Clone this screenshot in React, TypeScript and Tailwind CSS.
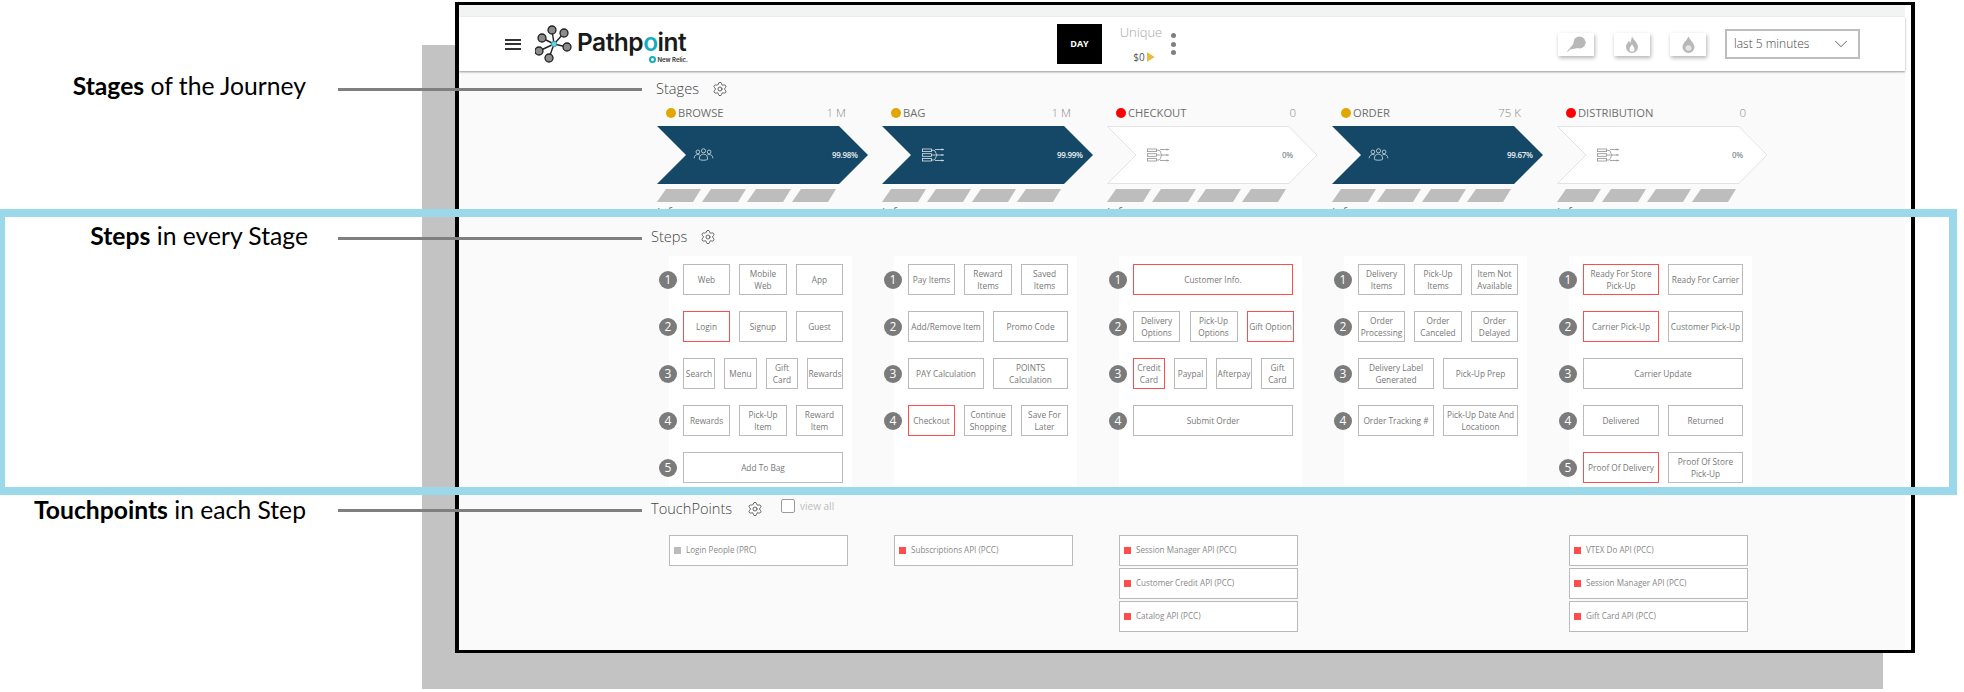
import { Settings, ChevronDown } from 'lucide-react';

type Item = [string, string, boolean?];
type Col = { ml: string; boxes: string; rows: Item[][] };

const columns: Col[] = [
  {
    ml: 'ml-[210px]', boxes: 'w-[160px]',
    rows: [
      [['Web', 'w-[47px]'], ['Mobile\nWeb', 'w-[48px]'], ['App', 'w-[47px]']],
      [['Login', 'w-[47px]', true], ['Signup', 'w-[48px]'], ['Guest', 'w-[47px]']],
      [['Search', 'w-[32px]'], ['Menu', 'w-[33px]'], ['Gift Card', 'w-[32px]'], ['Rewards', 'w-[36px]']],
      [['Rewards', 'w-[47px]'], ['Pick-Up Item', 'w-[48px]'], ['Reward Item', 'w-[47px]']],
      [['Add To Bag', 'w-[160px]']],
    ],
  },
  {
    ml: 'ml-[42px]', boxes: 'w-[160px]',
    rows: [
      [['Pay Items', 'w-[47px]'], ['Reward Items', 'w-[48px]'], ['Saved Items', 'w-[47px]']],
      [['Add/Remove Item', 'w-[76px]'], ['Promo Code', 'w-[75px]']],
      [['PAY Calculation', 'w-[76px]'], ['POINTS Calculation', 'w-[75px]']],
      [['Checkout', 'w-[47px]', true], ['Continue Shopping', 'w-[48px]'], ['Save For Later', 'w-[47px]']],
    ],
  },
  {
    ml: 'ml-[42px]', boxes: 'w-[161px]',
    rows: [
      [['Customer Info.', 'w-[160px]', true]],
      [['Delivery Options', 'w-[47px]'], ['Pick-Up Options', 'w-[48px]'], ['Gift Option', 'w-[47px]', true]],
      [['Credit Card', 'w-[32px]', true], ['Paypal', 'w-[33px]'], ['Afterpay', 'w-[36px]'], ['Gift Card', 'w-[33px]']],
      [['Submit Order', 'w-[160px]']],
    ],
  },
  {
    ml: 'ml-[42px]', boxes: 'w-[160px]',
    rows: [
      [['Delivery Items', 'w-[47px]'], ['Pick-Up Items', 'w-[48px]'], ['Item Not Available', 'w-[47px]']],
      [['Order Processing', 'w-[47px]'], ['Order Canceled', 'w-[48px]'], ['Order Delayed', 'w-[47px]']],
      [['Delivery Label Generated', 'w-[76px]'], ['Pick-Up Prep', 'w-[75px]']],
      [['Order Tracking #', 'w-[76px]'], ['Pick-Up Date And Locatioon', 'w-[75px]']],
    ],
  },
  {
    ml: 'ml-[42px]', boxes: 'w-[160px]',
    rows: [
      [['Ready For Store Pick-Up', 'w-[76px]', true], ['Ready For Carrier', 'w-[75px]']],
      [['Carrier Pick-Up', 'w-[76px]', true], ['Customer Pick-Up', 'w-[75px]']],
      [['Carrier Update', 'w-[160px]']],
      [['Delivered', 'w-[76px]'], ['Returned', 'w-[75px]']],
      [['Proof Of Delivery', 'w-[76px]', true], ['Proof Of Store Pick-Up', 'w-[75px]']],
    ],
  },
];

const stages = [
  { name: 'BROWSE', value: '1 M', dot: 'bg-[#e2a600]', solid: true, pct: '99.98%', icon: 'people' },
  { name: 'BAG', value: '1 M', dot: 'bg-[#e2a600]', solid: true, pct: '99.99%', icon: 'net' },
  { name: 'CHECKOUT', value: '0', dot: 'bg-[#ff0000]', solid: false, pct: '0%', icon: 'net' },
  { name: 'ORDER', value: '75 K', dot: 'bg-[#e2a600]', solid: true, pct: '99.67%', icon: 'people' },
  { name: 'DISTRIBUTION', value: '0', dot: 'bg-[#ff0000]', solid: false, pct: '0%', icon: 'net' },
];

function People({ color }: { color: string }) {
  return (
    <svg width="21" height="14" viewBox="0 0 22 15" fill="none" stroke={color} strokeWidth="0.8">
      <circle cx="5" cy="4.2" r="2" />
      <circle cx="17" cy="4.2" r="2" />
      <circle cx="11" cy="3" r="2.2" />
      <path d="M1 11c0-2.600 1.600-4 4-4 .8 0 1.400.2 2 .5M21 11c0-2.600-1.600-4-4-4-.8 0-1.400.2-2 .5" />
      <path d="M6.500 12c0-3.400 1.800-5.500 4.500-5.500s4.500 2.100 4.500 5.500c-1 1.500-8 1.500-9 0z" />
    </svg>
  );
}

function Net({ color }: { color: string }) {
  return (
    <svg width="22" height="15" viewBox="0 0 22 15" fill="none" stroke={color} strokeWidth="0.8">
      <rect x="0.500" y="1" width="9" height="2.600" />
      <rect x="0.500" y="5.700" width="9" height="2.600" />
      <rect x="0.500" y="10.400" width="9" height="2.600" />
      <path d="M9.500 2.300H12c1.500 0 1.500 3 3 4.700M9.500 12H12c1.500 0 1.500-3 3-5M9.500 7H15" />
      <path d="M13 1.500h9M15 7h7M13 12.500h9M20 .5v2M20 6v2M20 11.500v2" />
    </svg>
  );
}

function Logo() {
  const nodes = [
    [7, 13], [17, 5], [29, 8], [32, 22], [14, 33], [4, 26],
  ];
  return (
    <svg width="40" height="38" viewBox="0 0 40 38">
      {nodes.map(([x, y]) => (
        <line key={`${x}-${y}`} x1="19" y1="19" x2={x} y2={y} stroke="#222" strokeWidth="1.400" />
      ))}
      {nodes.map(([x, y]) => (
        <circle key={`c${x}-${y}`} cx={x} cy={y} r="4" fill="#8c8c8c" stroke="#222" strokeWidth="1.300" />
      ))}
      <circle cx="19" cy="19" r="2.800" fill="#6fd0dc" stroke="#1f8fa0" strokeWidth="0.800" />
    </svg>
  );
}

function Chevron({ solid }: { solid: boolean }) {
  return (
    <svg className="absolute inset-0" width="211" height="58" viewBox="0 0 211 58">
      {solid ? (
        <polygon points="0,0 182,0 211,29 182,58 0,58 29,29" fill="#144866" />
      ) : (
        <polygon points="0.500,0.500 182,0.500 210,29 182,57.500 0.500,57.500 29,29" fill="#ffffff" stroke="#e3e3e3" />
      )}
    </svg>
  );
}

function Stage({ s }: { s: (typeof stages)[number] }) {
  const ic = s.solid ? '#dfe7ec' : '#8f8f8f';
  return (
    <div className="w-[211px] shrink-0">
      <div className="flex h-[16px] items-center pl-[9px] pr-[22px]">
        <span className={`h-[10px] w-[10px] rounded-full ${s.dot}`} />
        <span className="ml-[2px] text-[11.2px] text-[#6f6f6f]">{s.name}</span>
        <span className="ml-auto text-[11.5px] font-light text-[#8a8a8a]">{s.value}</span>
      </div>
      <div className="relative mt-[5px] h-[58px] w-[211px]">
        <Chevron solid={s.solid} />
        <div className="relative flex h-full items-center">
          <span className={s.icon === 'people' ? 'ml-[36px] flex' : 'ml-[40px] flex'}>
            {s.icon === 'people' ? <People color={ic} /> : <Net color={ic} />}
          </span>
          <span
            className={`absolute left-[175px] text-[8px] font-semibold tracking-[-0.3px] ${
              s.solid ? 'text-[#e8eef2]' : 'text-[#86929c]'
            }`}
          >
            {s.pct}
          </span>
        </div>
      </div>
      <div className="mt-[5px] flex h-[13px]">
        {[0, 1, 2, 3].map((i) => (
          <span key={i} className="h-[13px] w-[45px] bg-[#bdbdbd] [clip-path:polygon(9px_0,44px_0,36px_100%,0_100%)]" />
        ))}
      </div>
      <div className="mt-[3px] text-[12px] leading-[16px] text-[#777777]">Info</div>
    </div>
  );
}

function StepCol({ col }: { col: Col }) {
  return (
    <div className={`h-[235px] w-[183px] shrink-0 bg-white pt-[8px] ${col.ml}`}>
      <div className="flex flex-col gap-[16px]">
        {col.rows.map((row, i) => (
          <div key={i} className="-ml-[10px] flex items-center">
            <span className="flex h-[18px] w-[18px] shrink-0 items-center justify-center rounded-full bg-[#7b7b7b] text-[12px] leading-none text-white">
              {i + 1}
            </span>
            <div className={`ml-[6px] flex justify-between ${col.boxes}`}>
              {row.map(([text, w, red]) => (
                <div
                  key={text}
                  className={`flex h-[31px] items-center justify-center whitespace-pre-line border text-center text-[8.3px] leading-[11.500px] text-[#777777] ${w} ${
                    red ? 'border-[#ff4c4c]' : 'border-[#bababa]'
                  }`}
                >
                  {text}
                </div>
              ))}
            </div>
          </div>
        ))}
      </div>
    </div>
  );
}

function Touch({ text, gray }: { text: string; gray?: boolean }) {
  return (
    <div className="flex h-[31px] w-[179px] items-center border border-[#bababa] bg-white pl-[4px]">
      <span className={`h-[7px] w-[7px] ${gray ? 'bg-[#bbbbbb]' : 'bg-[#ff4c4c]'}`} />
      <span className="ml-[5px] text-[8.1px] text-[#888888]">{text}</span>
    </div>
  );
}

function SectionTitle({ text }: { text: string }) {
  return <span className="text-[14.6px] font-light text-[#444444]">{text}</span>;
}

export default function App() {
  return (
    <div className="relative h-[692px] w-[1964px] overflow-hidden bg-white font-['Open_Sans',sans-serif]">
      {/* grey backdrop behind the window */}
      <div className="absolute left-[422px] top-[45px] h-[644px] w-[1461px] bg-[#c3c3c3]" />

      {/* the framed application window */}
      <div className="relative ml-[455px] mt-[2px] h-[651px] w-[1460px] border-x-4 border-y-[3px] border-black bg-white">
        <div className="h-full w-[1446px] bg-[#fafafa]">
          <div className="h-[12px] bg-[#f2f4f4]" />
          <header className="flex h-[54px] items-center bg-white pr-[45px] shadow-[0_1px_2px_rgba(0,0,0,0.4)]">
            <div className="ml-[46px] flex w-[16px] flex-col gap-[2.500px]">
              <span className="h-[2px] bg-[#333333]" />
              <span className="h-[2px] bg-[#333333]" />
              <span className="h-[2px] bg-[#333333]" />
            </div>
            <div className="ml-[14px]">
              <Logo />
            </div>
            <div className="relative ml-[2px] mt-[3px] w-[112px]">
              <div className="font-['Inter',sans-serif] text-[24.500px] font-semibold leading-[28px] tracking-[-0.5px] text-[#1a1a1a]">
                Pathp<span className="text-[#12aebf]">o</span>int
              </div>
              <div className="flex items-center justify-end gap-[2px] pr-[1px] font-['Inter',sans-serif] text-[6px] font-semibold leading-[7px] text-[#333333]">
                <span className="h-[7px] w-[7px] rounded-full border-2 border-[#12aebf]" />
                New Relic.
              </div>
            </div>
            <div className="ml-[368px] flex h-[40px] w-[45px] items-center justify-center bg-black text-[9px] font-bold text-white">
              DAY
            </div>
            <div className="ml-[18px] flex h-[40px] w-[42px] flex-col items-center justify-between">
              <span className="-mt-[1px] text-[13px] font-light leading-[18px] text-[#a6a6a6]">Unique</span>
              <span className="flex items-center gap-[2px] pl-[6px] text-[10px] leading-[14px] text-[#555555]">
                $0
                <span className="h-[10px] w-[8px] bg-[#e8bc3c] [clip-path:polygon(0_0,100%_50%,0_100%)]" />
              </span>
            </div>
            <div className="ml-[9px] flex flex-col gap-[3.500px]">
              <span className="h-[5px] w-[5px] rounded-full bg-[#7f7f7f]" />
              <span className="h-[5px] w-[5px] rounded-full bg-[#7f7f7f]" />
              <span className="h-[5px] w-[5px] rounded-full bg-[#7f7f7f]" />
            </div>
            <div className="ml-auto flex items-center gap-[20px]">
              <button className="flex h-[23px] w-[36px] items-center justify-center bg-white shadow-[1px_2px_4px_rgba(0,0,0,0.3)]">
                <svg width="19" height="16" viewBox="0 0 19 16" fill="#b8b8b8">
                  <circle cx="12.500" cy="6.500" r="6" />
                  <path d="M0 15.500 L8 6 L11 12 L3 13.500 L1 15.800 Z" />
                  <path d="M18 5.500 L19 6.500 L18 7.500 Z" />
                </svg>
              </button>
              <button className="flex h-[23px] w-[36px] items-center justify-center bg-white shadow-[1px_2px_4px_rgba(0,0,0,0.3)]">
                <svg width="12" height="17" viewBox="0 0 12 17">
                  <path d="M6 0 C7 4 12 6.500 12 11 A6 6 0 0 1 0 11 C0 8 2 6.500 3 4.500 C3.500 6 4 6.500 4.500 7 C5 5 5.500 2.500 6 0Z" fill="#b8b8b8" />
                  <path d="M6 8 C6.500 10 8.500 11 8.500 13.300 A2.500 2.500 0 0 1 3.500 13.300 C3.500 11 5.500 10 6 8Z" fill="#ffffff" />
                </svg>
              </button>
              <button className="flex h-[23px] w-[36px] items-center justify-center bg-white shadow-[1px_2px_4px_rgba(0,0,0,0.3)]">
                <svg width="13" height="17" viewBox="0 0 13 17">
                  <path d="M6.500 0.500 C8 4 12.500 7.500 12.500 11 A6 6 0 0 1 0.500 11 C0.500 7.500 5 4 6.500 0.500Z" fill="#b8b8b8" />
                  <ellipse cx="6.500" cy="12" rx="3" ry="2.800" fill="#e4e4e4" />
                </svg>
              </button>
              <div className="-ml-[1px] flex h-[30px] w-[135px] items-center justify-between border-2 border-[#bdbdbd] bg-white pl-[7px] pr-[6px]">
                <span className="text-[12px] font-light text-[#444444]">last 5 minutes</span>
                <ChevronDown size={22} strokeWidth={0.9} className="text-[#33415c]" />
              </div>
            </div>
          </header>

          <section className="h-[156px] overflow-hidden pt-[8px]">
            <div className="flex h-[20px] items-center gap-[13px] pl-[197px]">
              <SectionTitle text="Stages" />
              <Settings size={16} strokeWidth={1.200} className="text-[#444444]" />
            </div>
            <div className="mt-[6px] flex gap-[14px] pl-[198px]">
              {stages.map((s) => (
                <Stage key={s.name} s={s} />
              ))}
            </div>
          </section>

          <section className="h-[272px]">
            <div className="flex h-[20px] items-center gap-[13px] pl-[192px]">
              <SectionTitle text="Steps" />
              <Settings size={16} strokeWidth={1.200} className="text-[#444444]" />
            </div>
            <div className="mt-[9px] flex">
              {columns.map((c, i) => (
                <StepCol key={i} col={c} />
              ))}
            </div>
          </section>

          <section>
            <div className="flex h-[20px] items-center pl-[192px]">
              <SectionTitle text="TouchPoints" />
              <Settings size={16} strokeWidth={1.200} className="ml-[15px] text-[#444444]" />
              <span className="mb-[6px] ml-[18px] h-[14px] w-[14px] rounded-[2px] border border-[#9a9a9a] bg-white" />
              <span className="mb-[6px] ml-[5px] text-[10px] text-[#bdbdbd]">view all</span>
            </div>
            <div className="mt-[16px] flex pl-[210px]">
              <div className="w-[225px]">
                <Touch text="Login People (PRC)" gray />
              </div>
              <div className="w-[225px]">
                <Touch text="Subscriptions API (PCC)" />
              </div>
              <div className="flex w-[450px] flex-col gap-[2px]">
                <Touch text="Session Manager API (PCC)" />
                <Touch text="Customer Credit API (PCC)" />
                <Touch text="Catalog API (PCC)" />
              </div>
              <div className="flex flex-col gap-[2px]">
                <Touch text="VTEX Do API (PCC)" />
                <Touch text="Session Manager API (PCC)" />
                <Touch text="Gift Card API (PCC)" />
              </div>
            </div>
          </section>
        </div>
      </div>

      {/* annotation highlight */}
      <div className="absolute left-0 top-[209px] h-[286px] w-[1957px] border-y-8 border-l-[5px] border-r-8 border-[#9ad8ea]" />

      {/* annotation captions and connector lines */}
      <div className="absolute left-0 top-[72px] flex w-[642px] items-center">
        <p className="w-[306px] text-right font-['Lato',sans-serif] text-[24.700px] leading-[28px] text-black">
          <b>Stages</b> of the Journey
        </p>
        <span className="ml-[32px] mt-[6px] h-[3px] flex-1 bg-[#7f7f7f]" />
      </div>
      <div className="absolute left-0 top-[222px] flex w-[642px] items-center">
        <p className="w-[308px] text-right font-['Lato',sans-serif] text-[24.700px] leading-[28px] text-black">
          <b>Steps</b> in every Stage
        </p>
        <span className="ml-[30px] mt-[4px] h-[3px] flex-1 bg-[#7f7f7f]" />
      </div>
      <div className="absolute left-0 top-[496px] flex w-[642px] items-center">
        <p className="w-[306px] text-right font-['Lato',sans-serif] text-[24.700px] leading-[28px] text-black">
          <b>Touchpoints</b> in each Step
        </p>
        <span className="ml-[32px] mt-[1px] h-[3px] flex-1 bg-[#7f7f7f]" />
      </div>
    </div>
  );
}
